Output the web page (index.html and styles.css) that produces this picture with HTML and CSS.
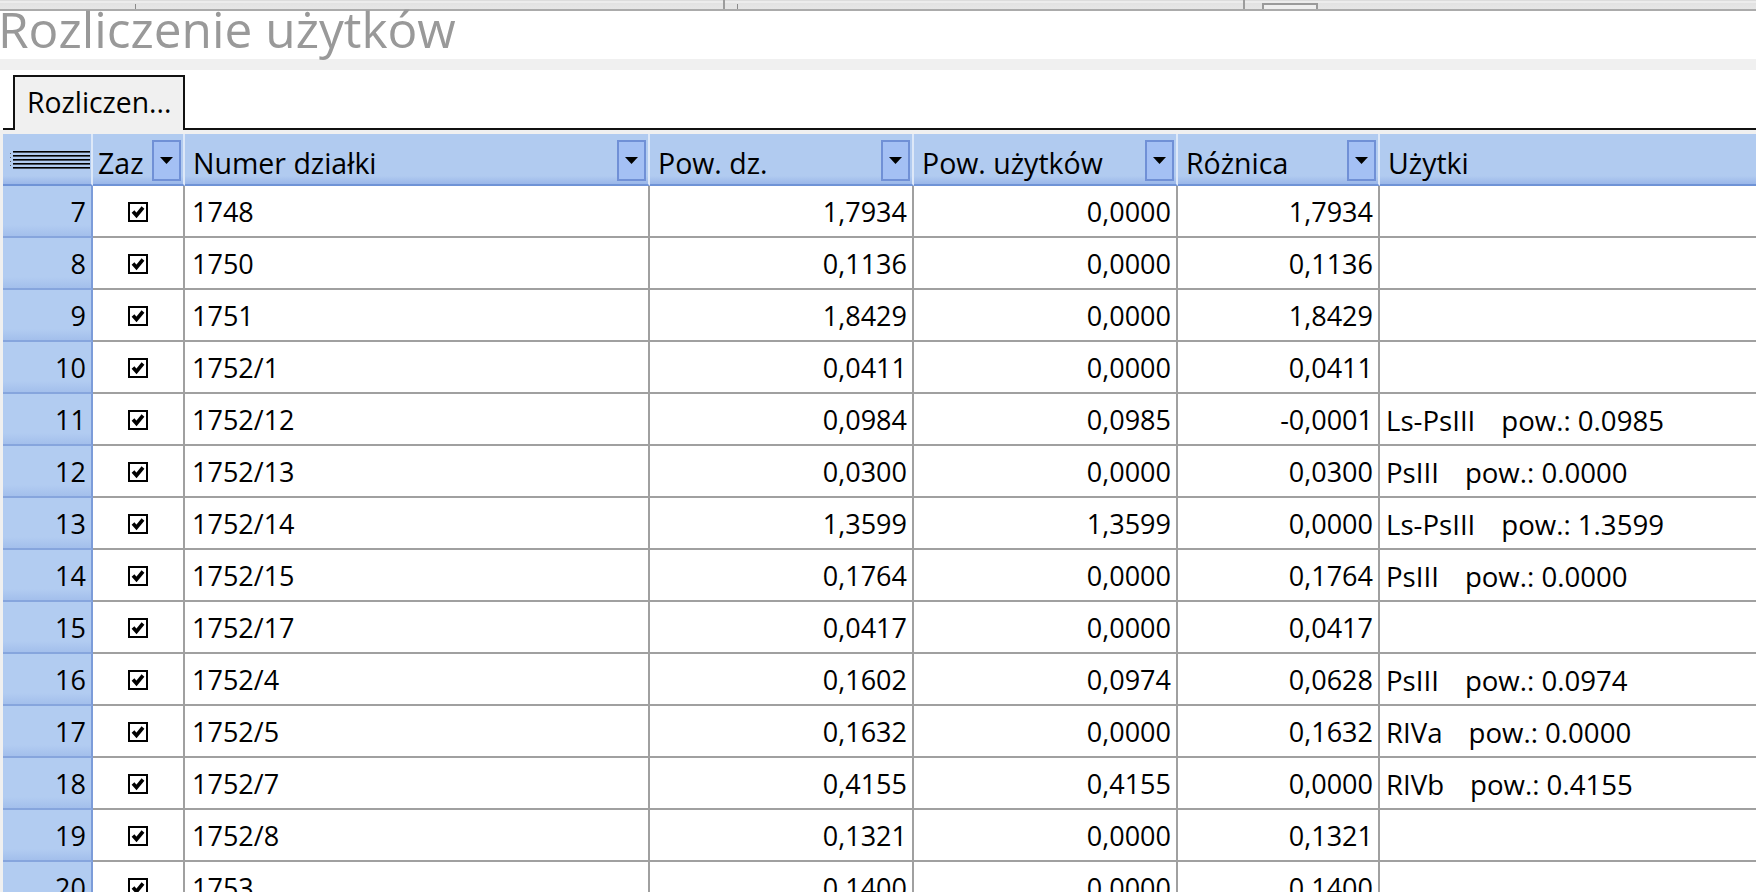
FILE: index.html
```html
<!DOCTYPE html>
<html lang="pl">
<head>
<meta charset="utf-8">
<title>Rozliczenie użytków</title>
<link rel="stylesheet" href="styles.css">
</head>
<body>
<div class="toolbar">
  <div class="tb-gap w135"></div><div class="tb-tick"></div>
  <div class="tb-gap w587"></div><div class="tb-sep"></div>
  <div class="tb-gap w12"></div><div class="tb-tick"></div>
  <div class="tb-gap w505"></div><div class="tb-sep"></div>
  <div class="tb-gap w17"></div><div class="tb-tabshape"></div>
</div>
<div class="title">Rozliczenie użytków</div>
<div class="band"></div>
<div class="tabstrip">
  <div class="tab-lead"></div>
  <div class="tab">Rozliczen...</div>
  <div class="tab-fill"></div>
</div>
<div class="page">
  <div class="grid">
    <div class="row head">
      <div class="hc corner">
        <svg width="80" height="18" viewBox="0 0 80 18"><g fill="#000"><rect x="3" y="0" width="77" height="1.6"/><rect x="3" y="4" width="77" height="1.6"/><rect x="3" y="8" width="77" height="1.6"/><rect x="3" y="12" width="77" height="1.6"/><rect x="3" y="16" width="77" height="1.6"/></g><g fill="#555"><rect x="0" y="2" width="1" height="1"/><rect x="0" y="6" width="1" height="1"/><rect x="0" y="10" width="1" height="1"/><rect x="0" y="14" width="1" height="1"/></g></svg>
      </div>
      <div class="hc"><span class="lbl">Zaz</span><span class="dd"><svg width="13" height="7" viewBox="0 0 13 7"><polygon points="0,0 13,0 6.5,7" fill="#000"/></svg></span></div>
      <div class="hc"><span class="lbl">Numer działki</span><span class="dd"><svg width="13" height="7" viewBox="0 0 13 7"><polygon points="0,0 13,0 6.5,7" fill="#000"/></svg></span></div>
      <div class="hc"><span class="lbl">Pow. dz.</span><span class="dd"><svg width="13" height="7" viewBox="0 0 13 7"><polygon points="0,0 13,0 6.5,7" fill="#000"/></svg></span></div>
      <div class="hc"><span class="lbl">Pow. użytków</span><span class="dd"><svg width="13" height="7" viewBox="0 0 13 7"><polygon points="0,0 13,0 6.5,7" fill="#000"/></svg></span></div>
      <div class="hc"><span class="lbl">Różnica</span><span class="dd"><svg width="13" height="7" viewBox="0 0 13 7"><polygon points="0,0 13,0 6.5,7" fill="#000"/></svg></span></div>
      <div class="hc last"><span class="lbl">Użytki</span></div>
    </div>

    <div class="row"><div class="rh">7</div><div class="c chk"><svg width="20" height="20" viewBox="0 0 20 20"><rect x="1" y="1" width="18" height="18" fill="#fff" stroke="#000" stroke-width="2"/><polyline points="5,9.5 8.5,13.5 15,5.5" fill="none" stroke="#000" stroke-width="3.6" stroke-linejoin="miter"/></svg></div><div class="c">1748</div><div class="c num">1,7934</div><div class="c num">0,0000</div><div class="c num">1,7934</div><div class="c txt"></div></div>
    <div class="row"><div class="rh">8</div><div class="c chk"><svg width="20" height="20" viewBox="0 0 20 20"><rect x="1" y="1" width="18" height="18" fill="#fff" stroke="#000" stroke-width="2"/><polyline points="5,9.5 8.5,13.5 15,5.5" fill="none" stroke="#000" stroke-width="3.6" stroke-linejoin="miter"/></svg></div><div class="c">1750</div><div class="c num">0,1136</div><div class="c num">0,0000</div><div class="c num">0,1136</div><div class="c txt"></div></div>
    <div class="row"><div class="rh">9</div><div class="c chk"><svg width="20" height="20" viewBox="0 0 20 20"><rect x="1" y="1" width="18" height="18" fill="#fff" stroke="#000" stroke-width="2"/><polyline points="5,9.5 8.5,13.5 15,5.5" fill="none" stroke="#000" stroke-width="3.6" stroke-linejoin="miter"/></svg></div><div class="c">1751</div><div class="c num">1,8429</div><div class="c num">0,0000</div><div class="c num">1,8429</div><div class="c txt"></div></div>
    <div class="row"><div class="rh">10</div><div class="c chk"><svg width="20" height="20" viewBox="0 0 20 20"><rect x="1" y="1" width="18" height="18" fill="#fff" stroke="#000" stroke-width="2"/><polyline points="5,9.5 8.5,13.5 15,5.5" fill="none" stroke="#000" stroke-width="3.6" stroke-linejoin="miter"/></svg></div><div class="c">1752/1</div><div class="c num">0,0411</div><div class="c num">0,0000</div><div class="c num">0,0411</div><div class="c txt"></div></div>
    <div class="row"><div class="rh">11</div><div class="c chk"><svg width="20" height="20" viewBox="0 0 20 20"><rect x="1" y="1" width="18" height="18" fill="#fff" stroke="#000" stroke-width="2"/><polyline points="5,9.5 8.5,13.5 15,5.5" fill="none" stroke="#000" stroke-width="3.6" stroke-linejoin="miter"/></svg></div><div class="c">1752/12</div><div class="c num">0,0984</div><div class="c num">0,0985</div><div class="c num">-0,0001</div><div class="c txt">Ls-PsIII<span class="gap"></span>pow.: 0.0985</div></div>
    <div class="row"><div class="rh">12</div><div class="c chk"><svg width="20" height="20" viewBox="0 0 20 20"><rect x="1" y="1" width="18" height="18" fill="#fff" stroke="#000" stroke-width="2"/><polyline points="5,9.5 8.5,13.5 15,5.5" fill="none" stroke="#000" stroke-width="3.6" stroke-linejoin="miter"/></svg></div><div class="c">1752/13</div><div class="c num">0,0300</div><div class="c num">0,0000</div><div class="c num">0,0300</div><div class="c txt">PsIII<span class="gap"></span>pow.: 0.0000</div></div>
    <div class="row"><div class="rh">13</div><div class="c chk"><svg width="20" height="20" viewBox="0 0 20 20"><rect x="1" y="1" width="18" height="18" fill="#fff" stroke="#000" stroke-width="2"/><polyline points="5,9.5 8.5,13.5 15,5.5" fill="none" stroke="#000" stroke-width="3.6" stroke-linejoin="miter"/></svg></div><div class="c">1752/14</div><div class="c num">1,3599</div><div class="c num">1,3599</div><div class="c num">0,0000</div><div class="c txt">Ls-PsIII<span class="gap"></span>pow.: 1.3599</div></div>
    <div class="row"><div class="rh">14</div><div class="c chk"><svg width="20" height="20" viewBox="0 0 20 20"><rect x="1" y="1" width="18" height="18" fill="#fff" stroke="#000" stroke-width="2"/><polyline points="5,9.5 8.5,13.5 15,5.5" fill="none" stroke="#000" stroke-width="3.6" stroke-linejoin="miter"/></svg></div><div class="c">1752/15</div><div class="c num">0,1764</div><div class="c num">0,0000</div><div class="c num">0,1764</div><div class="c txt">PsIII<span class="gap"></span>pow.: 0.0000</div></div>
    <div class="row"><div class="rh">15</div><div class="c chk"><svg width="20" height="20" viewBox="0 0 20 20"><rect x="1" y="1" width="18" height="18" fill="#fff" stroke="#000" stroke-width="2"/><polyline points="5,9.5 8.5,13.5 15,5.5" fill="none" stroke="#000" stroke-width="3.6" stroke-linejoin="miter"/></svg></div><div class="c">1752/17</div><div class="c num">0,0417</div><div class="c num">0,0000</div><div class="c num">0,0417</div><div class="c txt"></div></div>
    <div class="row"><div class="rh">16</div><div class="c chk"><svg width="20" height="20" viewBox="0 0 20 20"><rect x="1" y="1" width="18" height="18" fill="#fff" stroke="#000" stroke-width="2"/><polyline points="5,9.5 8.5,13.5 15,5.5" fill="none" stroke="#000" stroke-width="3.6" stroke-linejoin="miter"/></svg></div><div class="c">1752/4</div><div class="c num">0,1602</div><div class="c num">0,0974</div><div class="c num">0,0628</div><div class="c txt">PsIII<span class="gap"></span>pow.: 0.0974</div></div>
    <div class="row"><div class="rh">17</div><div class="c chk"><svg width="20" height="20" viewBox="0 0 20 20"><rect x="1" y="1" width="18" height="18" fill="#fff" stroke="#000" stroke-width="2"/><polyline points="5,9.5 8.5,13.5 15,5.5" fill="none" stroke="#000" stroke-width="3.6" stroke-linejoin="miter"/></svg></div><div class="c">1752/5</div><div class="c num">0,1632</div><div class="c num">0,0000</div><div class="c num">0,1632</div><div class="c txt">RIVa<span class="gap"></span>pow.: 0.0000</div></div>
    <div class="row"><div class="rh">18</div><div class="c chk"><svg width="20" height="20" viewBox="0 0 20 20"><rect x="1" y="1" width="18" height="18" fill="#fff" stroke="#000" stroke-width="2"/><polyline points="5,9.5 8.5,13.5 15,5.5" fill="none" stroke="#000" stroke-width="3.6" stroke-linejoin="miter"/></svg></div><div class="c">1752/7</div><div class="c num">0,4155</div><div class="c num">0,4155</div><div class="c num">0,0000</div><div class="c txt">RIVb<span class="gap"></span>pow.: 0.4155</div></div>
    <div class="row"><div class="rh">19</div><div class="c chk"><svg width="20" height="20" viewBox="0 0 20 20"><rect x="1" y="1" width="18" height="18" fill="#fff" stroke="#000" stroke-width="2"/><polyline points="5,9.5 8.5,13.5 15,5.5" fill="none" stroke="#000" stroke-width="3.6" stroke-linejoin="miter"/></svg></div><div class="c">1752/8</div><div class="c num">0,1321</div><div class="c num">0,0000</div><div class="c num">0,1321</div><div class="c txt"></div></div>
    <div class="row"><div class="rh">20</div><div class="c chk"><svg width="20" height="20" viewBox="0 0 20 20"><rect x="1" y="1" width="18" height="18" fill="#fff" stroke="#000" stroke-width="2"/><polyline points="5,9.5 8.5,13.5 15,5.5" fill="none" stroke="#000" stroke-width="3.6" stroke-linejoin="miter"/></svg></div><div class="c">1753</div><div class="c num">0,1400</div><div class="c num">0,0000</div><div class="c num">0,1400</div><div class="c txt"></div></div>
  </div>
</div>
</body>
</html>
```

FILE: styles.css
```css
* { box-sizing: border-box; }
html, body {
  margin: 0;
  padding: 0;
  height: 892px;
  overflow: hidden;
  background: #ffffff;
  font-family: "Open Sans", "Noto Sans", sans-serif;
  color: #000;
}

/* top toolbar remnant */
.toolbar {
  height: 11px;
  display: flex;
  align-items: stretch;
  background: linear-gradient(to bottom, #dcdcdc 0, #dcdcdc 1px, #ececec 1px, #ececec 3px, #e2e2e2 3px, #e6e6e6 9px);
  border-bottom: 2px solid #ababab;
}
.tb-gap { flex: none; }
.w135 { width: 135px; }
.w587 { width: 587px; }
.w12 { width: 12px; }
.w505 { width: 505px; }
.w17 { width: 17px; }
.tb-tick { width: 1px; margin-top: 4px; background: #8a8a8a; flex: none; }
.tb-sep { width: 2px; background: #9c9c9c; flex: none; }
.tb-tabshape {
  width: 56px;
  margin-top: 3px;
  border: 2px solid #9a9a9a;
  border-bottom: none;
  background: #efefef;
  flex: none;
}

/* title */
.title {
  height: 48px;
  line-height: 36px;
  font-size: 49.6px;
  color: #999999;
  white-space: nowrap;
  margin-left: -2px;
}
.band {
  height: 11px;
  background: #f0f0f0;
}

/* tab strip */
.tabstrip {
  height: 60px;
  display: flex;
  align-items: flex-end;
  background: #fff;
}
.tab-lead {
  width: 10px;
  height: 2px;
  margin-left: 3px;
  background: #111;
  flex: none;
}
.tab {
  width: 172px;
  height: 55px;
  flex: none;
  border: 2px solid #111;
  border-bottom: none;
  background: #f0f0f0;
  font-size: 28.3px;
  line-height: 36px;
  padding: 7px 0 0 12px;
  white-space: nowrap;
}
.tab-fill {
  flex: 1;
  height: 2px;
  background: #111;
}

/* page & grid */
.page {
  background: #f0f0f0;
  padding: 4px 0 0 3px;
}
.grid {
  display: flex;
  flex-direction: column;
  background: #fff;
}
.row {
  display: grid;
  grid-template-columns: 90px 92px 465px 264px 264px 202px 1fr;
  height: 52px;
  font-size: 27px;
}
.c {
  height: 52px;
  border-right: 2px solid #a0a0a0;
  border-bottom: 2px solid #a0a0a0;
  line-height: 52px;
  padding: 0 6px 0 7px;
  white-space: pre;
  overflow: hidden;
  background: #fff;
}
.c.num { text-align: right; padding-right: 5px; }
.c.txt { border-right: none; padding-left: 6px; font-size: 27.6px; }
.gap { display: inline-block; width: 26px; }
.c.chk {
  display: flex;
  align-items: center;
  justify-content: center;
  padding: 2px 0 0 0;
}

.rh {
  height: 52px;
  text-align: right;
  padding-right: 5px;
  line-height: 52px;
  background: linear-gradient(to bottom, #b2ccf1 0, #b2ccf1 78%, #a3bfec 100%);
  border-right: 2px solid #7c9cd9;
  border-bottom: 2px solid #86a5dd;
}

/* header */
.row.head .hc {
  height: 52px;
  display: flex;
  align-items: flex-start;
  padding: 0 2px 0 8px;
  background: linear-gradient(to bottom, #b1cbf0 0, #b1cbf0 84%, #9ab7e9 100%);
  border-right: 2px solid #dde8f8;
  border-bottom: 2px solid #6f93d6;
  white-space: nowrap;
  font-size: 28.5px;
}
.row.head .hc:nth-child(2) { padding-left: 5px; }
.row.head .hc.last { border-right: none; }
.row.head .hc.corner {
  padding: 17px 0 0 7px;
}
.row.head .hc.corner svg { display: block; }
.lbl {
  line-height: 46px;
  margin-top: 6px;
}
.dd {
  margin-left: auto;
  margin-top: 6px;
  width: 29px;
  height: 41px;
  border: 2px solid #7090d6;
  background: #a4c0f4;
  display: flex;
  align-items: center;
  justify-content: center;
  flex: none;
}
.dd svg { display: block; }
```
